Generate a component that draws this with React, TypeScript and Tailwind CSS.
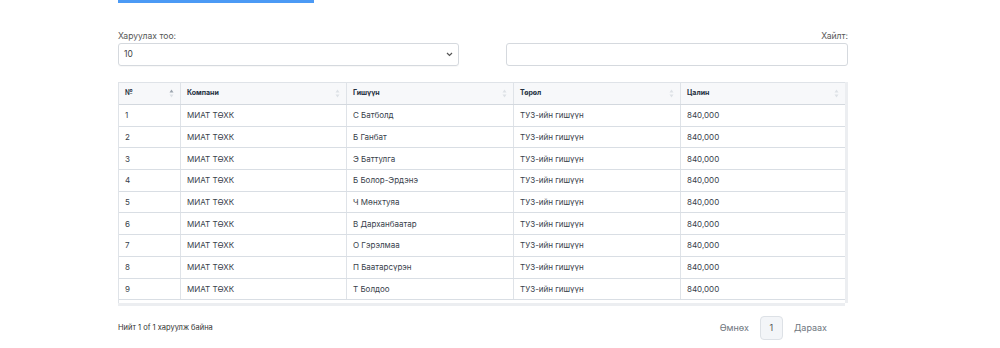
import React from "react";

const names = [
  "С Батболд",
  "Б Ганбат",
  "Э Баттулга",
  "Б Болор-Эрдэнэ",
  "Ч Мөнхтуяа",
  "В Дарханбаатар",
  "О Гэрэлмаа",
  "П Баатарсүрэн",
  "Т Болдоо",
];

const cols = [
  { label: "№", w: "w-[62px]", active: true },
  { label: "Компани", w: "w-[166px]" },
  { label: "Гишүүн", w: "w-[167px]" },
  { label: "Төрөл", w: "w-[167px]" },
  { label: "Цалин", w: "flex-1" },
];

const SortIcon = ({ active }: { active?: boolean }) => (
  <svg width="5" height="9" viewBox="0 0 5 9" className="shrink-0">
    <path d="M2.5 0.5 L4.5 3.5 H0.5 Z" fill={active ? "#9aa3ad" : "#dde1e6"} />
    <path d="M2.5 8.5 L4.5 5.5 H0.5 Z" fill="#dde1e6" />
  </svg>
);

export default function App() {
  return (
    <div
      className="w-[1000px] h-[348px] bg-white overflow-hidden"
      style={{ fontFamily: "Inter, 'Noto Sans', sans-serif" }}
    >
      <div className="ml-[118px] w-[730px]">
        <div className="w-[196px] h-[3px] bg-[#4b9af5]" />

        {/* controls */}
        <div className="flex justify-between mt-[28px]">
          <div className="w-[341px]">
            <div className="text-[8.6px] leading-[11px] text-[#555]">Харуулах тоо:</div>
            <div className="mt-[1px] h-[23px] border border-[#d5d9de] rounded-[3px] flex items-center justify-between px-[5px] shadow-[0_1px_1px_rgba(0,0,0,0.03)]">
              <span className="text-[8.5px] text-[#444]">10</span>
              <svg width="7" height="5" viewBox="0 0 7 5">
                <path d="M1 1 L3.5 3.5 L6 1" fill="none" stroke="#555" strokeWidth="1.2" />
              </svg>
            </div>
          </div>
          <div className="w-[342px] flex flex-col items-end">
            <div className="text-[8.6px] leading-[11px] text-[#555]">Хайлт:</div>
            <div className="mt-[1px] h-[23px] w-full border border-[#d5d9de] rounded-[3px]" />
          </div>
        </div>

        {/* table area */}
        <div className="mt-[16px] h-[224px] flex flex-col overflow-hidden">
          <div className="flex flex-1 min-h-0">
            <div className="flex-1 overflow-hidden border-l border-t border-[#dfe3e8]">
              <div className="flex h-[22px] bg-[#f7f8fa] border-b border-[#d3d8de]">
                {cols.map((c, i) => (
                  <div
                    key={c.label}
                    className={`${c.w} flex items-center justify-between px-[6px] ${i < cols.length - 1 ? "border-r border-[#dfe3e8]" : ""}`}
                  >
                    <span className="text-[7px] font-bold text-[#243040]">{c.label}</span>
                    <SortIcon active={c.active} />
                  </div>
                ))}
              </div>
              {names.map((n, r) => (
                <div key={n} className="flex h-[21.7px] border-b border-[#d9dee4] text-[8px] text-[#38414b]">
                  <div className="w-[62px] flex items-center px-[6px] border-r border-[#dfe3e8]">{r + 1}</div>
                  <div className="w-[166px] flex items-center px-[6px] border-r border-[#dfe3e8]">МИАТ ТӨХК</div>
                  <div className="w-[167px] flex items-center px-[6px] border-r border-[#dfe3e8]">{n}</div>
                  <div className="w-[167px] flex items-center px-[6px] border-r border-[#dfe3e8]">ТУЗ-ийн гишүүн</div>
                  <div className="flex-1 flex items-center px-[6px]">840,000</div>
                </div>
              ))}
            </div>
            <div className="w-[3px] bg-[#eceef1]" />
          </div>
          <div className="h-[3px] w-[727px] bg-[#eceef1]" />
        </div>

        {/* footer */}
        <div className="flex items-center justify-between mt-[10px]">
          <div className="text-[7.5px] text-[#333]">Нийт 1 of 1 харуулж байна</div>
          <div className="flex items-center mr-[21px]">
            <span className="text-[9px] text-[#6f7780]">Өмнөх</span>
            <div className="ml-[11px] w-[23px] h-[24px] rounded-[4px] border border-[#dde1e6] bg-[#f3f5f8] flex items-center justify-center text-[9px] text-[#555]">
              1
            </div>
            <span className="ml-[11px] text-[9px] text-[#6f7780]">Дараах</span>
          </div>
        </div>
      </div>
    </div>
  );
}
